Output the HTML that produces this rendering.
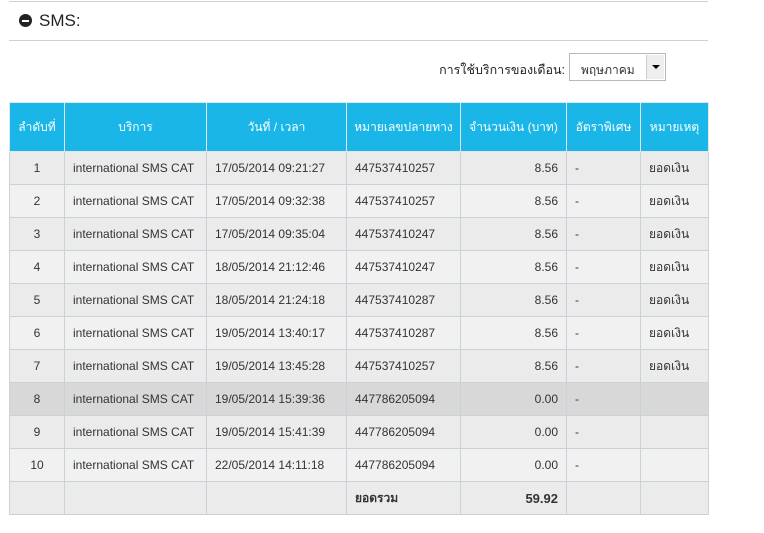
<!DOCTYPE html>
<html><head><meta charset="utf-8"><style>
body{margin:0;background:#fff;width:764px;height:533px;overflow:hidden;font-family:"Liberation Sans","DejaVu Sans",sans-serif;color:#333}
.top{position:absolute;left:9px;top:1px;width:699px;border-top:1px solid #ccd2d8}
.hd{position:absolute;left:9px;top:40px;width:699px;border-top:1px solid #ccd2d8}
.ttl{position:absolute;left:19px;top:11px;font-size:17px;color:#222}
.ic{display:inline-block;width:13px;height:13px;border-radius:50%;background:#222;position:relative;vertical-align:-1px;margin-right:7px}
.ic:after{content:"";position:absolute;left:3px;top:5.5px;width:7px;height:2px;background:#fff}
.lbl{position:absolute;right:199px;top:60px;font-size:12.5px;color:#222;white-space:nowrap}
.sel{position:absolute;left:569px;top:53px;width:97px;height:28px;border:1px solid #b8b8b8;box-sizing:border-box;background:#fff;font-size:12px}
.sel span{position:absolute;left:11px;top:7px}
.sel b{position:absolute;right:1px;top:1px;width:17px;height:24px;background:#eee;border-left:1px solid #ccc}
.sel b:after{content:"";position:absolute;left:5px;top:10px;border:4px solid transparent;border-top:4px solid #000;border-bottom:0}
table{position:absolute;left:9px;top:102px;border-collapse:collapse;font-size:12px}
td,th{border:1px solid #c9d1d9;padding:0 8px;height:33px;box-sizing:border-box;white-space:nowrap}
th{background:#1ab6e8;color:#fff;font-weight:normal;height:49px;border-color:#e0e8ee;font-size:12px;padding:0 4px}
tr{background:#ebebeb}
tr.a{background:#f1f1f1}
tr.h{background:#d8d8d8}
.c{text-align:center}.r{text-align:right}
</style></head><body>
<div class="top"></div>
<div class="ttl"><span class="ic"></span>SMS:</div>
<div class="hd"></div>
<div class="lbl">การใช้บริการของเดือน:</div>
<div class="sel"><span>พฤษภาคม</span><b></b></div>
<table>
<tr><th style="width:55px">ลำดับที่</th><th style="width:142px">บริการ</th><th style="width:140px">วันที่ / เวลา</th><th style="width:114px">หมายเลขปลายทาง</th><th style="width:106px">จำนวนเงิน (บาท)</th><th style="width:74px">อัตราพิเศษ</th><th style="width:68px">หมายเหตุ</th></tr>
<tr><td class="c">1</td><td>international SMS CAT</td><td>17/05/2014 09:21:27</td><td>447537410257</td><td class="r">8.56</td><td>-</td><td>ยอดเงิน</td></tr>
<tr class="a"><td class="c">2</td><td>international SMS CAT</td><td>17/05/2014 09:32:38</td><td>447537410257</td><td class="r">8.56</td><td>-</td><td>ยอดเงิน</td></tr>
<tr><td class="c">3</td><td>international SMS CAT</td><td>17/05/2014 09:35:04</td><td>447537410247</td><td class="r">8.56</td><td>-</td><td>ยอดเงิน</td></tr>
<tr class="a"><td class="c">4</td><td>international SMS CAT</td><td>18/05/2014 21:12:46</td><td>447537410247</td><td class="r">8.56</td><td>-</td><td>ยอดเงิน</td></tr>
<tr><td class="c">5</td><td>international SMS CAT</td><td>18/05/2014 21:24:18</td><td>447537410287</td><td class="r">8.56</td><td>-</td><td>ยอดเงิน</td></tr>
<tr class="a"><td class="c">6</td><td>international SMS CAT</td><td>19/05/2014 13:40:17</td><td>447537410287</td><td class="r">8.56</td><td>-</td><td>ยอดเงิน</td></tr>
<tr><td class="c">7</td><td>international SMS CAT</td><td>19/05/2014 13:45:28</td><td>447537410257</td><td class="r">8.56</td><td>-</td><td>ยอดเงิน</td></tr>
<tr class="h"><td class="c">8</td><td>international SMS CAT</td><td>19/05/2014 15:39:36</td><td>447786205094</td><td class="r">0.00</td><td>-</td><td></td></tr>
<tr><td class="c">9</td><td>international SMS CAT</td><td>19/05/2014 15:41:39</td><td>447786205094</td><td class="r">0.00</td><td>-</td><td></td></tr>
<tr class="a"><td class="c">10</td><td>international SMS CAT</td><td>22/05/2014 14:11:18</td><td>447786205094</td><td class="r">0.00</td><td>-</td><td></td></tr>
<tr><td></td><td></td><td></td><td><b>ยอดรวม</b></td><td class="r" style="font-size:13px"><b>59.92</b></td><td></td><td></td></tr>
</table>
</body></html>
